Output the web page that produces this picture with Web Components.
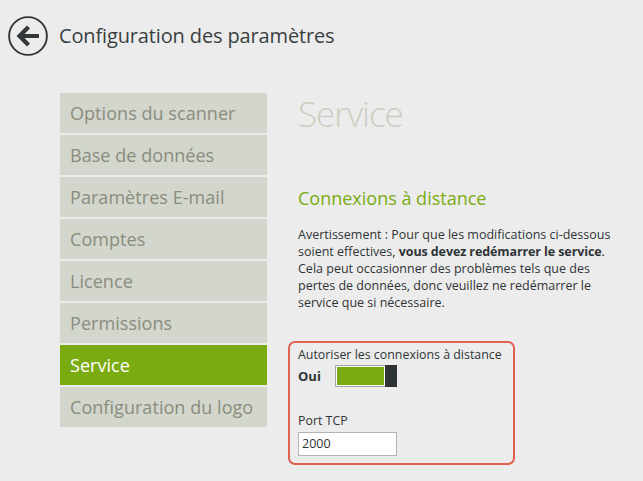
<!DOCTYPE html>
<html lang="fr">
<head>
<meta charset="utf-8">
<title>Configuration des paramètres</title>
<style>
  html, body { margin: 0; height: 100%; }
  body {
    background: #ececec;
    color: #2f3436;
    font-family: "Open Sans", "Noto Sans", "Liberation Sans", sans-serif;
    overflow: hidden;
  }
</style>
</head>
<body>
<app-page>
  <app-header slot="header">Configuration des paramètres</app-header>
  <side-nav slot="nav">
    <nav-item>Options du scanner</nav-item>
    <nav-item>Base de données</nav-item>
    <nav-item>Paramètres E-mail</nav-item>
    <nav-item>Comptes</nav-item>
    <nav-item>Licence</nav-item>
    <nav-item>Permissions</nav-item>
    <nav-item active>Service</nav-item>
    <nav-item>Configuration du logo</nav-item>
  </side-nav>
  <service-panel slot="content"></service-panel>
</app-page>

<script>
class AppPage extends HTMLElement {
  constructor() {
    super()
    this.attachShadow({ mode: 'open' })
    this.shadowRoot.innerHTML = `
      <style>
        :host { display: block; }
        .main {
          display: grid;
          grid-template-columns: 207px 1fr;
          column-gap: 31px;
          padding: 0 0 0 60px;
        }
      </style>
      <slot name="header"></slot>
      <div class="main">
        <slot name="nav"></slot>
        <slot name="content"></slot>
      </div>
    `
  }
}

class AppHeader extends HTMLElement {
  constructor() {
    super()
    this.attachShadow({ mode: 'open' })
    this.shadowRoot.innerHTML = `
      <style>
        :host {
          display: flex;
          align-items: center;
          gap: 11px;
          height: 93px;
          padding: 0 0 21px 8px;
          box-sizing: border-box;
        }
        svg { display: block; flex: none; }
        .title { font-size: 20px; line-height: 28px; letter-spacing: -0.14px; color: #3a3f41; }
      </style>
      <svg width="40" height="40" viewBox="0 0 40 40" fill="none" stroke="#333739">
        <circle cx="20" cy="20" r="18.9" stroke-width="1.9"/>
        <path d="M31 20H12" stroke-width="4"/>
        <path d="M20.5 11L11.5 20l9 9" stroke-width="4.2"/>
      </svg>
      <span class="title"><slot></slot></span>
    `
  }
}

class SideNav extends HTMLElement {
  constructor() {
    super()
    this.attachShadow({ mode: 'open' })
    this.shadowRoot.innerHTML = `
      <style>
        :host { display: flex; flex-direction: column; gap: 2px; }
      </style>
      <slot></slot>
    `
  }
}

class NavItem extends HTMLElement {
  constructor() {
    super()
    this.attachShadow({ mode: 'open' })
    this.shadowRoot.innerHTML = `
      <style>
        :host {
          display: flex;
          align-items: center;
          height: 40px;
          padding-left: 10px;
          background: #d3d6cc;
          color: #8a8d7e;
          font-size: 18px;
          letter-spacing: 0.05px;
          white-space: nowrap;
        }
        :host([active]) { background: #7aab10; color: #fff; }
      </style>
      <slot></slot>
    `
  }
}

class ToggleSwitch extends HTMLElement {
  constructor() {
    super()
    this.attachShadow({ mode: 'open' })
    this.shadowRoot.innerHTML = `
      <style>
        :host {
          display: block;
          position: relative;
          width: 62px;
          height: 22px;
          box-sizing: border-box;
          border: 1px solid #a5a5a5;
          background: #fff;
          padding: 1px;
        }
        .fill { height: 100%; width: 47px; background: #7aab10; }
        .thumb { position: absolute; right: -1px; top: -1px; bottom: -1px; width: 12px; background: #2e3336; }
      </style>
      <div class="fill"></div>
      <div class="thumb"></div>
    `
  }
}

class ServicePanel extends HTMLElement {
  constructor() {
    super()
    this.attachShadow({ mode: 'open' })
    this.shadowRoot.innerHTML = `
      <style>
        :host { display: block; font-size: 12.5px; color: #2f3436; }
        h1 {
          margin: 0;
          font-weight: 300;
          font-size: 35px;
          line-height: 42px;
          letter-spacing: -1px;
          color: #cbcfc2;
        }
        h2 {
          margin: 51px 0 0;
          font-weight: 400;
          font-size: 18px;
          line-height: 24px;
          color: #7aab10;
        }
        p {
          margin: 16px 0 0;
          width: 328px;
          line-height: 17px;
        }
        p b { letter-spacing: -0.1px; }
        .box {
          margin: 30px 0 0 -10px;
          width: 227px;
          height: 124px;
          box-sizing: border-box;
          border: 2px solid #e2604f;
          border-radius: 7px;
          padding: 3px 8px;
        }
        .label { line-height: 17px; font-size: 12.4px; }
        .row { display: flex; align-items: center; gap: 13px; margin-top: 1px; height: 24px; }
        .row b { width: 24px; font-size: 13px; }
        .port { margin-top: 24px; }
        .input {
          margin-top: 3px;
          width: 99px;
          height: 24px;
          box-sizing: border-box;
          border: 1px solid #b4b4b4;
          background: #fff;
          padding-left: 3px;
          line-height: 22px;
        }
      </style>
      <h1>Service</h1>
      <h2>Connexions à distance</h2>
      <p>Avertissement : Pour que les modifications ci-dessous soient effectives, <b>vous devez redémarrer le service</b>. Cela peut occasionner des problèmes tels que des pertes de données, donc veuillez ne redémarrer le service que si nécessaire.</p>
      <div class="box">
        <div class="label">Autoriser les connexions à distance</div>
        <div class="row"><b>Oui</b><toggle-switch></toggle-switch></div>
        <div class="label port">Port TCP</div>
        <div class="input">2000</div>
      </div>
    `
  }
}

customElements.define('app-page', AppPage)
customElements.define('app-header', AppHeader)
customElements.define('side-nav', SideNav)
customElements.define('nav-item', NavItem)
customElements.define('toggle-switch', ToggleSwitch)
customElements.define('service-panel', ServicePanel)
</script>
</body>
</html>
